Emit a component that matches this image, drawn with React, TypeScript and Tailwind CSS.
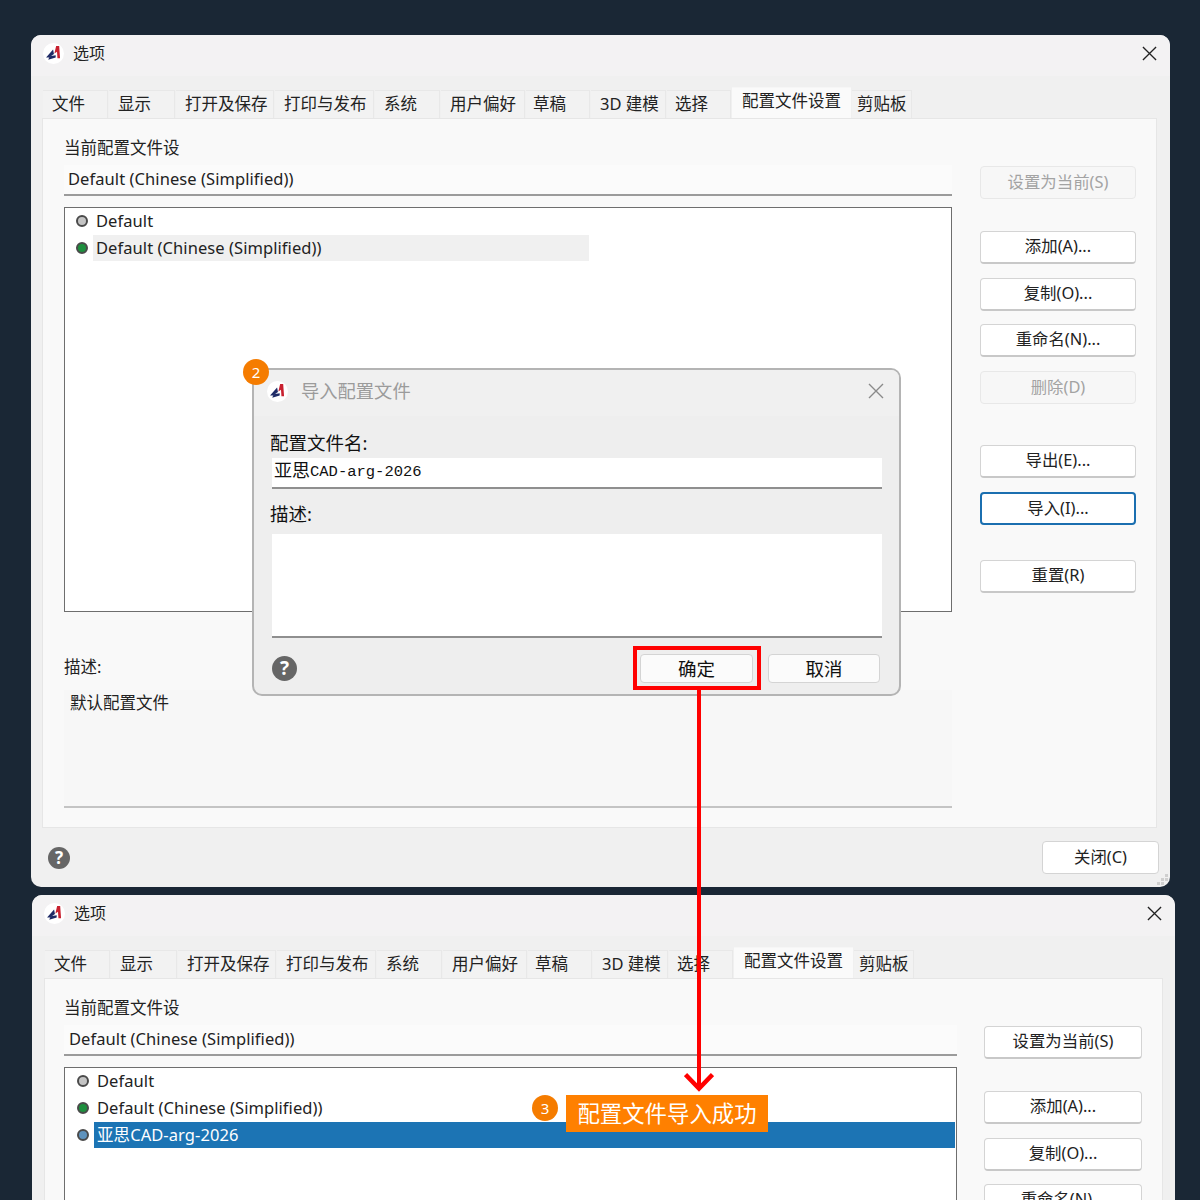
import React from 'react';

const FONT = 'font-["Noto_Sans","Noto_Sans_CJK_SC",sans-serif]';

const TABS_TOP = [
  { label: '文件', w: 65, pad: 'pl-[9px]' },
  { label: '显示', w: 66, pad: 'pl-[9px]' },
  { label: '打开及保存', w: 98, pad: 'pl-[9px]' },
  { label: '打印与发布', w: 99, pad: 'pl-[9px]' },
  { label: '系统', w: 65, pad: 'pl-[9px]' },
  { label: '用户偏好', w: 84, pad: 'pl-[9px]' },
  { label: '草稿', w: 64, pad: 'pl-[7px]' },
  { label: '3D 建模', w: 75, pad: 'pl-[9px]' },
  { label: '选择', w: 64, pad: 'pl-[8px]' },
  { label: '配置文件设置', w: 119, pad: 'pl-[10px]', active: true },
  { label: '剪贴板', w: 60, pad: 'pl-[5px]' },
];

const BUTTONS = [
  { label: '设置为当前(S)', gap: 'mt-0', first: true },
  { label: '添加(A)...', gap: 'mt-[32px]' },
  { label: '复制(O)...', gap: 'mt-[14px]' },
  { label: '重命名(N)...', gap: 'mt-[13px]' },
  { label: '删除(D)', gap: 'mt-[14px]', disabled: true },
  { label: '导出(E)...', gap: 'mt-[41px]' },
  { label: '导入(I)...', gap: 'mt-[14px]', focus: true },
  { label: '重置(R)', gap: 'mt-[35px]' },
];

const Logo = ({ className }: { className: string }) => (
  <svg viewBox="0 0 24 24" className={className}>
    <circle cx="12" cy="12" r="12" fill="#ffffff" />
    <path d="M15 3.5 L18.5 3.5 L19.5 17.5 L16.5 17.5 L16 10 L13 12 Z" fill="#c8202f" />
    <path d="M11.5 7.5 L3.5 16.5 L7 16.5 L12.5 12.5 Z" fill="#1e2a66" />
    <path d="M7.5 15 L14.5 14 L14.5 16.5 L6 19 Z" fill="#1e2a66" />
  </svg>
);

const CloseIcon = ({ className }: { className: string }) => (
  <svg viewBox="0 0 16 16" className={className} fill="none" stroke="currentColor" strokeWidth="1.4">
    <path d="M1 1 L15 15 M15 1 L1 15" />
  </svg>
);

const HelpIcon = ({ className }: { className: string }) => (
  <div className={`${className} flex flex-none items-center justify-center rounded-full bg-[#666666] font-bold text-white`}>?</div>
);

const Dot = ({ color, second }: { color: string; second?: boolean }) => (
  <div className={`flex flex-none justify-center pl-[6px] ${second ? 'w-[29px]' : 'w-[28px]'}`}>
    <div className={`h-[12px] w-[12px] flex-none rounded-full border-2 border-[#4a4a4a] ${color}`} />
  </div>
);

const SideButton = ({ label, gap, disabled, focus, wide }: { label: string; gap: string; disabled?: boolean; focus?: boolean; wide?: boolean }) => (
  <div
    className={`${gap} flex h-[33px] ${wide ? 'w-[158px]' : 'w-[156px]'} items-center justify-center rounded-[4px] pb-[1px] text-[16.4px] ${
      disabled
        ? 'border border-[#e8e8e8] bg-[#f7f7f7] text-[#a3a3a3]'
        : focus
          ? 'border-2 border-[#1b6fb0] bg-white text-[#222222]'
          : 'border border-[#d4d4d4] border-b-2 border-b-[#c8c8c8] bg-white text-[#222222]'
    }`}
  >
    {label}
  </div>
);

const OptionsWindow = ({ second }: { second?: boolean }) => (
  <div
    className={`flex h-[852px] flex-none flex-col overflow-hidden rounded-[10px] bg-[#f0f0f0] ${
      second ? 'ml-[32px] mt-[8px] w-[1143px]' : 'ml-[31px] w-[1139px]'
    }`}
  >
    <div className="flex h-[41px] flex-none items-center bg-[#f3f2f3] pb-[5px] pl-[12px] pr-[13px]">
      <Logo className="h-[21px] w-[21px]" />
      <span className="ml-[9px] flex-1 text-[16px] text-[#222222]">选项</span>
      <CloseIcon className="h-[15px] w-[15px] text-[#222222]" />
    </div>

    <div className={`flex h-[42px] flex-none items-end ${second ? 'pl-[13px]' : 'pl-[12px]'}`}>
      {TABS_TOP.map((t) => (
        <div
          key={t.label}
          style={{ width: t.w }}
          className={`mr-[1px] flex flex-none items-center text-[16.5px] text-[#222222] ${t.pad} ${
            t.active ? 'h-[31px] border-t border-[#f6f6f6] bg-[#fafafa] pb-[3px]' : 'h-[28px] border-t border-r border-[#e8e8e8] bg-[#f2f2f2]'
          }`}
        >
          {t.label}
        </div>
      ))}
    </div>

    <div className={`flex h-[710px] flex-none border border-[#e6e6e6] bg-[#f9f9f9] ${second ? 'ml-[12px] mr-[12px] pl-[19px] pr-[20px]' : 'ml-[11px] mr-[13px] pl-[21px] pr-[20px]'}`}>
      <div className="flex min-w-0 flex-1 flex-col pt-[19px]">
        <div className="h-[20px] text-[16.5px] leading-[20px] text-[#222222]">当前配置文件设</div>
        <div className={`mt-[7px] flex h-[31px] items-center border-b-2 border-[#9b9b9b] bg-[#fbfbfb] text-[16.5px] tracking-[0.07px] text-[#222222] ${second ? 'pl-[5px]' : 'pl-[4px]'}`}>
          Default (Chinese (Simplified))
        </div>
        <div className="mt-[11px] flex h-[405px] flex-col gap-[1px] border border-[#6e6e6e] bg-white pr-[1px] text-[16.5px] tracking-[0.07px] text-[#222222]">
          <div className="flex h-[26px] items-center">
            <Dot color="bg-[#c4c4c4]" second={second} />
            <span className="px-[3px]">Default</span>
          </div>
          <div className="flex h-[26px] items-center">
            <Dot color="border-[#1e8f3e] bg-[#1e8f3e]" second={second} />
            <span className={`w-[496px] px-[3px] leading-[26px] ${second ? 'bg-white' : 'bg-[#f0f0f0]'}`}>Default (Chinese (Simplified))</span>
          </div>
          {second && (
            <div className="flex h-[26px] items-center">
              <Dot color="border-[#3f6f96] bg-[#5f93bd]" second={second} />
              <span className="flex-1 bg-[#1c74b4] px-[3px] leading-[26px] text-white">亚思CAD-arg-2026</span>
            </div>
          )}
        </div>
        <div className="mt-[45px] h-[20px] text-[16.5px] leading-[20px] text-[#222222]">描述:</div>
        <div className="mt-[13px] h-[118px] border-b-2 border-[#c4c4c4] bg-[#f7f7f7] pl-[6px] pt-[1px] text-[16.5px] text-[#222222]">默认配置文件</div>
      </div>
      <div className={`flex flex-none flex-col pt-[47px] ${second ? 'ml-[27px]' : 'ml-[28px]'}`}>
        {BUTTONS.map((b) => (
          <SideButton
            key={b.label}
            label={b.label}
            gap={b.gap}
            wide={second}
            focus={b.focus && !second}
            disabled={b.disabled || (b.first && !second)}
          />
        ))}
      </div>
    </div>

    <div className="flex flex-1 items-center justify-between pl-[17px] pr-[11px]">
      <HelpIcon className="h-[22px] w-[22px] text-[17px]" />
      <div className="flex h-[33px] w-[117px] items-center justify-center rounded-[4px] border border-[#d4d4d4] bg-white text-[16.4px] text-[#222222]">关闭(C)</div>
    </div>
  </div>
);

const ImportDialog = () => (
  <div className="absolute left-[252px] top-[368px] flex h-[328px] w-[649px] flex-col rounded-[10px] border-2 border-[#b4b4b4] bg-[#eeeeee]">
    <div className="flex h-[46px] flex-none items-center rounded-t-[8px] bg-[#f0f0f0] pb-[4px] pl-[13px] pr-[15px]">
      <Logo className="h-[21px] w-[21px]" />
      <span className="ml-[13px] flex-1 text-[18.3px] text-[#9b9b9b]">导入配置文件</span>
      <CloseIcon className="h-[16px] w-[16px] text-[#8a8a8a]" />
    </div>
    <div className="flex flex-1 flex-col pl-[16px] pr-[17px] pt-[16px]">
      <div className="h-[22px] text-[18.5px] leading-[22px] text-[#111111]">配置文件名:</div>
      <div className="ml-[2px] mt-[4px] flex h-[31px] items-center border-b-2 border-[#8f8f8f] bg-white pl-[2px] font-['Liberation_Mono','Noto_Sans_CJK_SC',monospace] text-[15.5px] text-[#111111]">
        <span className="text-[18px]">亚思</span>CAD-arg-2026
      </div>
      <div className="mt-[14px] h-[22px] text-[18.5px] leading-[22px] text-[#111111]">描述:</div>
      <div className="ml-[2px] mt-[9px] h-[104px] flex-none border-b-2 border-[#8f8f8f] bg-white" />
      <div className="flex flex-1 items-center justify-between pl-[2px] pt-[5px]">
        <HelpIcon className="h-[25px] w-[25px] text-[19px]" />
        <div className="flex gap-[15px] pr-[2px] text-[18.5px] text-[#111111]">
          <div className="flex h-[29px] w-[113px] items-center justify-center rounded-[4px] border border-[#d4d4d4] bg-[#fbfbfb]">确定</div>
          <div className="flex h-[29px] w-[112px] items-center justify-center rounded-[4px] border border-[#d4d4d4] bg-[#fbfbfb]">取消</div>
        </div>
      </div>
    </div>
  </div>
);

const Badge = ({ n, className }: { n: number; className: string }) => (
  <div className={`absolute flex h-[26px] w-[26px] items-center justify-center rounded-full bg-[#f57c00] text-[15px] text-white ${className}`}>{n}</div>
);

export default function App() {
  return (
    <div className={`relative flex h-[1200px] w-[1200px] flex-col overflow-hidden bg-[#1a2735] pt-[35px] ${FONT}`}>
      <OptionsWindow />
      <OptionsWindow second />

      <ImportDialog />
      <Badge n={2} className="left-[243px] top-[359px]" />

      {/* resize grip, bottom right of the first window */}
      <svg viewBox="0 0 12 12" className="absolute left-[1157px] top-[874px] h-[12px] w-[12px]" fill="#cfcfcf">
        <rect x="8" y="0" width="3" height="3" />
        <rect x="4" y="4" width="3" height="3" />
        <rect x="8" y="4" width="3" height="3" />
        <rect x="0" y="8" width="3" height="3" />
        <rect x="4" y="8" width="3" height="3" />
      </svg>

      {/* red callout */}
      <div className="absolute left-[633px] top-[646px] h-[44px] w-[128px] border-[4px] border-[#ff0000]" />
      <div className="absolute left-[697px] top-[690px] h-[398px] w-[4px] bg-[#ff0000]" />
      <svg viewBox="0 0 30 20" className="absolute left-[684px] top-[1072px] h-[21px] w-[30px]" fill="none" stroke="#ff0000" strokeWidth="4.5">
        <path d="M1.5 2 L15 16 L28.5 2" />
      </svg>

      <Badge n={3} className="left-[532px] top-[1095px]" />
      <div className="absolute left-[566px] top-[1095px] flex h-[37px] w-[202px] items-center justify-center bg-[#ff8000] text-[22.4px] text-white">配置文件导入成功</div>
    </div>
  );
}
